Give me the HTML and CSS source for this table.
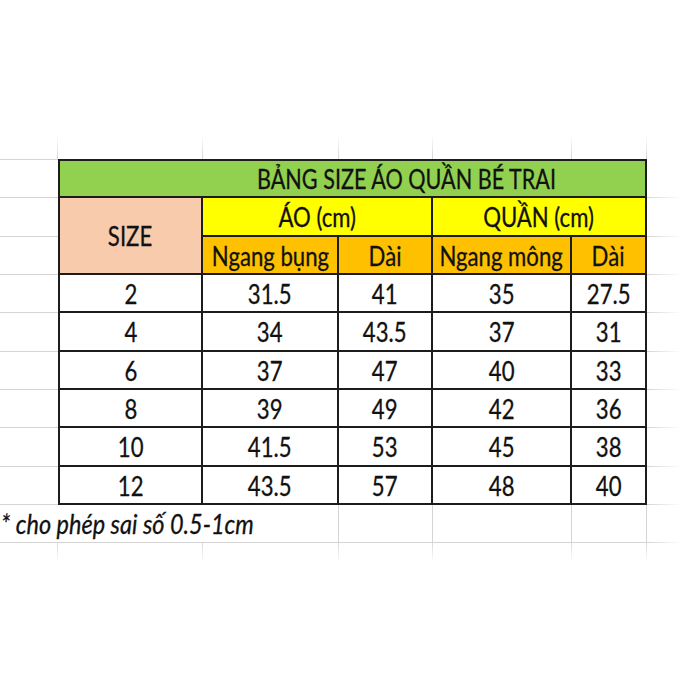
FILE: index.html
```html
<!DOCTYPE html>
<html lang="vi">
<head>
<meta charset="utf-8">
<title>Bảng size áo quần bé trai</title>
<link rel="stylesheet" href="styles.css">
</head>
<body>
<div class="sheet">
  <!-- row 1: top fade -->
  <div class="g top"></div><div class="g top"></div><div class="g top"></div><div class="g top"></div><div class="g top"></div><div class="g top"></div><div class="g top last"></div>

  <!-- row 2: title -->
  <div class="g left"></div>
  <div class="c title tl"><span class="t">BẢNG SIZE ÁO QUẦN BÉ TRAI</span></div>
  <div class="g right"></div>

  <!-- row 3 -->
  <div class="g left"></div>
  <div class="c size first"><span class="t">SIZE</span></div>
  <div class="c yellow span2"><span class="t">ÁO (cm)</span></div>
  <div class="c yellow span2"><span class="t">QUẦN (cm)</span></div>
  <div class="g right"></div>

  <!-- row 4 -->
  <div class="g left"></div>
  <div class="c orange"><span class="t">Ngang bụng</span></div>
  <div class="c orange"><span class="t">Dài</span></div>
  <div class="c orange"><span class="t">Ngang mông</span></div>
  <div class="c orange"><span class="t">Dài</span></div>
  <div class="g right"></div>

  <div class="g left"></div>
  <div class="c first"><span class="t">2</span></div><div class="c"><span class="t">31.5</span></div><div class="c"><span class="t">41</span></div><div class="c"><span class="t">35</span></div><div class="c"><span class="t">27.5</span></div>
  <div class="g right"></div>

  <div class="g left"></div>
  <div class="c first"><span class="t">4</span></div><div class="c"><span class="t">34</span></div><div class="c"><span class="t">43.5</span></div><div class="c"><span class="t">37</span></div><div class="c"><span class="t">31</span></div>
  <div class="g right"></div>

  <div class="g left"></div>
  <div class="c first"><span class="t">6</span></div><div class="c"><span class="t">37</span></div><div class="c"><span class="t">47</span></div><div class="c"><span class="t">40</span></div><div class="c"><span class="t">33</span></div>
  <div class="g right"></div>

  <div class="g left"></div>
  <div class="c first"><span class="t">8</span></div><div class="c"><span class="t">39</span></div><div class="c"><span class="t">49</span></div><div class="c"><span class="t">42</span></div><div class="c"><span class="t">36</span></div>
  <div class="g right"></div>

  <div class="g left"></div>
  <div class="c first"><span class="t">10</span></div><div class="c"><span class="t">41.5</span></div><div class="c"><span class="t">53</span></div><div class="c"><span class="t">45</span></div><div class="c"><span class="t">38</span></div>
  <div class="g right"></div>

  <div class="g left"></div>
  <div class="c first"><span class="t">12</span></div><div class="c"><span class="t">43.5</span></div><div class="c"><span class="t">57</span></div><div class="c"><span class="t">48</span></div><div class="c"><span class="t">40</span></div>
  <div class="g right"></div>

  <!-- footer row -->
  <div class="g note"><span class="t ti">* cho phép sai số 0.5-1cm</span></div>
  <div class="g foot"></div><div class="g foot"></div><div class="g foot"></div>
  <div class="g right"></div>

  <!-- bottom fade -->
  <div class="g bot"></div><div class="g bot"></div><div class="g bot"></div><div class="g bot"></div><div class="g bot"></div><div class="g bot"></div><div class="g bot last"></div>
</div>
</body>
</html>
```

FILE: styles.css
```css
html, body {
  margin: 0;
  padding: 0;
  background: #ffffff;
}

body {
  width: 700px;
  height: 700px;
  overflow: hidden;
  font-family: "Lato", "Open Sans", sans-serif;
  color: #111111;
}

.sheet {
  display: grid;
  margin-top: 135px;
  grid-template-columns: 58px 145px 136px 94px 139px 75px 53px;
  grid-template-rows: 24px 39px 39px 38px 38px 39px 38px 38px 39px 38px 38px 20px;
}

.g, .c {
  box-sizing: border-box;
  min-width: 0;
}

/* light spreadsheet gridlines */
.top {
  background: linear-gradient(to bottom, rgba(214,214,214,0), #d4d4d4) right / 1px 100% no-repeat;
}
.top.last,
.bot.last { background: none; }

.bot {
  background: linear-gradient(to top, rgba(214,214,214,0), #dadada) right / 1px 100% no-repeat;
}

.left {
  border-bottom: 1px solid #d4d4d4;
}
.sheet > .left:nth-child(8) {
  border-top: 1px solid #d4d4d4;
}

.right {
  background: linear-gradient(to right, #d4d4d4, rgba(214,214,214,0) 65%) bottom / 100% 1px no-repeat;
}

.foot {
  border-right: 1px solid #d4d4d4;
  border-bottom: 1px solid #d4d4d4;
}

.note {
  grid-column: 1 / 4;
  border-right: 1px solid #d4d4d4;
  border-bottom: 1px solid #d4d4d4;
  display: flex;
  align-items: center;
  padding-left: 1px;
  font-size: 27px;
}

/* table cells */
.c {
  display: flex;
  align-items: center;
  justify-content: center;
  border-right: 2px solid #1c1c1c;
  border-bottom: 2px solid #1c1c1c;
  font-size: 27px;
  background: #ffffff;
}

.first { border-left: 2px solid #1c1c1c; }

.title {
  grid-column: 2 / 7;
  background: #92d050;
  border-top: 2px solid #1c1c1c;
  border-left: 2px solid #1c1c1c;
  justify-content: flex-start;
  padding-left: 197px;
}

.size {
  grid-row: span 2;
  background: #f8cbad;
}

.yellow {
  background: #ffff00;
}

.span2 { grid-column: span 2; }

.orange {
  background: #ffc000;
}

.t {
  display: inline-block;
  white-space: nowrap;
  transform: scaleX(0.82);
  line-height: 1;
  -webkit-text-stroke: 0.3px #111111;
}

.title .t { transform: scaleX(0.8); }

.tl .t,
.ti { transform-origin: left center; }

.ti {
  font-style: italic;
  transform: scaleX(0.87);
}
```
